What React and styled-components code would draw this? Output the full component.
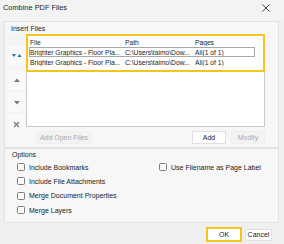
import React from "react";
import styled, { createGlobalStyle } from "styled-components";

const Global = createGlobalStyle`
  html, body { margin: 0; padding: 0; background: #f0f0f0; }
  body { font-family: "Liberation Sans", Arial, sans-serif; }
  * { box-sizing: border-box; }
`;

const Dialog = styled.div`
  width: 284px;
  height: 244px;
  background: #f0f0f0;
  display: flex;
  flex-direction: column;
  font-size: 7px;
  color: #222;
  overflow: hidden;
`;

const TitleBar = styled.div`
  height: 21px;
  display: flex;
  align-items: center;
  justify-content: space-between;
  padding: 0 14px 0 3px;
  background: #f3f3f3;
`;

const Title = styled.div`
  font-size: 7.4px;
  color: #1c1c1c;
  margin-top: -6px;
`;

const Group = styled.div`
  margin: 0 5px 0 4px;
  background: #f7f7f7;
  border: 1px solid #e2e2e2;
  display: flex;
  flex-direction: column;
  padding: ${(p) => p.$pad};
  height: ${(p) => p.$h}px;
`;

const GroupLabel = styled.div`
  height: 9px;
  line-height: 9px;
  padding-left: ${(p) => p.$indent}px;
  color: #1e1e1e;
`;

const FilesRow = styled.div`
  display: flex;
  gap: 1px;
  margin-top: 1px;
  height: 93px;
`;

const SideCol = styled.div`
  width: 17px;
  display: flex;
  flex-direction: column;
  align-items: center;
  padding-top: 12px;
  gap: 2px;
  background: #f4f4f4;
`;

const SideBtn = styled.div`
  width: 17px;
  height: 20px;
  flex: none;
  display: flex;
  align-items: center;
  justify-content: center;
  background: #f9f9f9;
  margin-top: ${(p) => p.$mt || 0}px;
`;

const ListBox = styled.div`
  width: 239px;
  background: #fff;
  border: 1px solid #c9c9c9;
  border-top: none;
  display: flex;
  flex-direction: column;
`;

const Highlight = styled.div`
  border: 2px solid #f4c51d;
  margin: 0 -1px;
  padding: 1px 1px 3px 1px;
`;

const Row = styled.div`
  display: grid;
  grid-template-columns: 95px 70px 1fr;
  height: 10px;
  line-height: 10px;
  font-size: 6.7px;
  border: 1px solid ${(p) => (p.$focus ? "#a8a8a8" : "transparent")};
  width: 226px;
  white-space: nowrap;
  overflow: hidden;
`;

const Cell = styled.span`
  overflow: hidden;
`;

const ButtonRow = styled.div`
  display: flex;
  align-items: center;
  margin-top: 4px;
  height: 13px;
  padding-left: 28px;
  padding-right: 13px;
`;

const Btn = styled.div`
  width: ${(p) => p.$w}px;
  height: ${(p) => p.$hh || 13}px;
  display: flex;
  align-items: center;
  justify-content: center;
  background: ${(p) => (p.$disabled ? "#f3f3f3" : "#fff")};
  color: ${(p) => (p.$disabled ? "#a9a9a9" : "#222")};
  border: ${(p) => (p.$hl ? "2px solid #f4c51d" : p.$disabled ? "1px solid #efefef" : "1px solid #e0e0e0")};
  margin-left: ${(p) => p.$ml || 0}px;
`;

const Spacer = styled.div`
  flex: 1;
`;

const OptionsGrid = styled.div`
  display: grid;
  grid-template-columns: 142px 1fr;
  padding-left: 12px;
  margin-top: 1px;
`;

const CheckCol = styled.div`
  display: flex;
  flex-direction: column;
`;

const CheckRow = styled.label`
  display: flex;
  align-items: center;
  height: 14.3px;
  gap: 4px;
`;

const Box = styled.span`
  width: 8px;
  height: 8px;
  border: 1px solid #7d7d7d;
  border-radius: 1.5px;
  background: #fbfbfb;
`;

const Footer = styled.div`
  display: flex;
  align-items: center;
  justify-content: flex-end;
  padding: 4px 12px 0 0;
  gap: 3px;
`;

const Check = ({ children }) => (
  <CheckRow>
    <Box />
    {children}
  </CheckRow>
);

export default function App() {
  return (
    <>
      <Global />
      <Dialog>
        <TitleBar>
          <Title>Combine PDF Files</Title>
          <svg width="8" height="8" viewBox="0 0 8 8" style={{ marginTop: -6 }}>
            <path d="M0.5 0.5 L7.5 7.5 M7.5 0.5 L0.5 7.5" stroke="#333" strokeWidth="0.9" />
          </svg>
        </TitleBar>
        <Group $pad="2px 0 0 3px" $h={127}>
          <GroupLabel $indent={3}>Insert Files</GroupLabel>
          <FilesRow>
            <SideCol>
              <SideBtn>
                <svg width="10" height="6" viewBox="0 0 10 6">
                  <path d="M0 1 L4 1 L2 4 Z" fill="#1b6fc2" />
                  <path d="M5.5 4 L9.5 4 L7.5 1 Z" fill="#1b6fc2" />
                </svg>
              </SideBtn>
              <SideBtn $mt={2}>
                <svg width="6" height="5" viewBox="0 0 6 5">
                  <path d="M0 4 L6 4 L3 0.5 Z" fill="#7a7a7a" />
                </svg>
              </SideBtn>
              <SideBtn>
                <svg width="6" height="5" viewBox="0 0 6 5">
                  <path d="M0 1 L6 1 L3 4.5 Z" fill="#7a7a7a" />
                </svg>
              </SideBtn>
              <SideBtn>
                <svg width="7" height="7" viewBox="0 0 7 7">
                  <path d="M1 1 L6 6 M6 1 L1 6" stroke="#7a7a7a" strokeWidth="1.3" />
                </svg>
              </SideBtn>
            </SideCol>
            <ListBox>
              <Highlight>
                <Row>
                  <Cell>File</Cell>
                  <Cell>Path</Cell>
                  <Cell>Pages</Cell>
                </Row>
                <Row $focus>
                  <Cell>Brighter Graphics - Floor Pla...</Cell>
                  <Cell>C:\Users\taimo\Dow...</Cell>
                  <Cell>All(1 of 1)</Cell>
                </Row>
                <Row>
                  <Cell>Brighter Graphics - Floor Pla...</Cell>
                  <Cell>C:\Users\taimo\Dow...</Cell>
                  <Cell>All(1 of 1)</Cell>
                </Row>
              </Highlight>
            </ListBox>
          </FilesRow>
          <ButtonRow>
            <Btn $w={56} $disabled>Add Open Files</Btn>
            <Spacer />
            <Btn $w={34}>Add</Btn>
            <Btn $w={34} $ml={5} $disabled>Modify</Btn>
          </ButtonRow>
        </Group>
        <Group $pad="1px 0 0 0" $h={75}>
          <GroupLabel $indent={7}>Options</GroupLabel>
          <OptionsGrid>
            <CheckCol>
              <Check>Include Bookmarks</Check>
              <Check>Include File Attachments</Check>
              <Check>Merge Document Properties</Check>
              <Check>Merge Layers</Check>
            </CheckCol>
            <CheckCol>
              <Check>Use Filename as Page Label</Check>
            </CheckCol>
          </OptionsGrid>
        </Group>
        <Footer>
          <Btn $w={36} $hh={15} $hl>OK</Btn>
          <Btn $w={27} $hh={12}>Cancel</Btn>
        </Footer>
      </Dialog>
    </>
  );
}
